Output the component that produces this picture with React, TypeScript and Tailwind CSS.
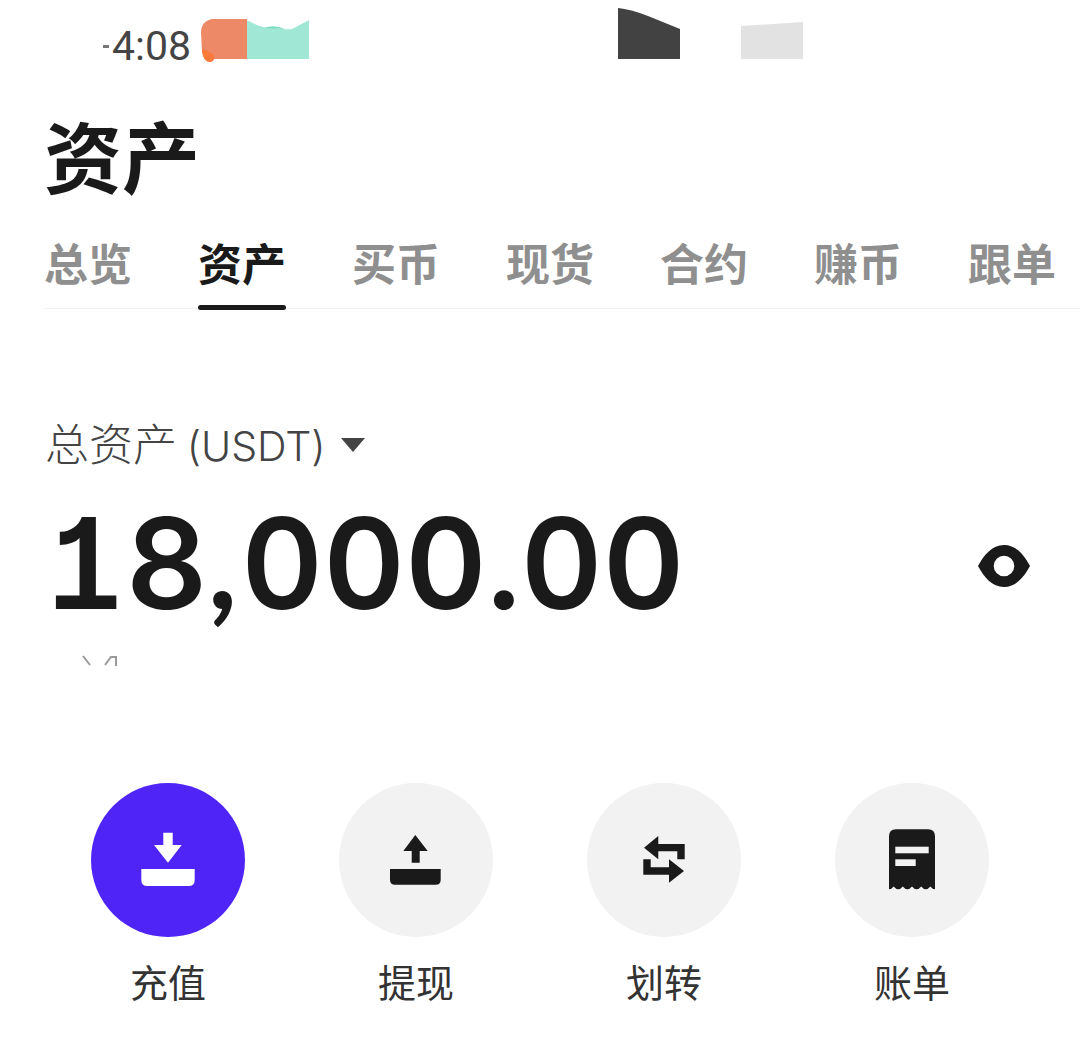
const CJK = "font-['Noto_Sans_CJK_SC','Noto_Sans',sans-serif]";

function Smudges() {
  return (
    <div className="flex h-[66px] items-start pl-[103px]">
      <span className="mt-[24px] flex w-[97px] items-center font-['Roboto',sans-serif] text-[41px] leading-[44px] text-[#444444]">
        <span className="mr-[3px] block h-[3px] w-[6px] bg-[#777777]" />4:08
      </span>
      <svg width="109" height="46" viewBox="0 0 109 46" className="mt-[17px]">
        <path d="M47 2 H12 Q1 4 1 16 L2 34 Q3 45 11 45 L14 42 H47 Z" fill="#ee8967" />
        <path d="M2 32 Q3 45 10 45 Q15 45 14 38 L8 34 Z" fill="#fb7a3a" />
        <path d="M47 3 Q62 12 74 11 Q85 13 92 12 L109 3 V42 H47 Z" fill="#a0e8d5" />
        <path d="M64 11 Q74 7 85 12 Z" fill="#7ddcc2" />
      </svg>
      <svg width="62" height="52" viewBox="0 0 62 52" className="ml-[309px] mt-[7px]">
        <path d="M0 1 Q12 2 30 9 L62 22 V52 H0 Z" fill="#424242" />
      </svg>
      <svg width="62" height="38" viewBox="0 0 62 38" className="ml-[61px] mt-[21px]">
        <path d="M0 5 L62 1 V38 H0 Z" fill="#e2e2e2" />
      </svg>
    </div>
  );
}

const tabs = ["总览", "资产", "买币", "现货", "合约", "赚币", "跟单"];

function Tabs() {
  return (
    <div className="ml-[44px] mt-[38px] flex h-[77px] gap-[66px] border-b border-[#f2f2f2]">
      {tabs.map((t, i) => (
        <div key={t} className="relative w-[88px] shrink-0">
          <span className={`block text-[44px] leading-[60px] font-semibold whitespace-nowrap ${i === 1 ? "text-[#1a1a1a]" : "text-[#8f8f8f]"}`}>{t}</span>
          {i === 1 && <div className="absolute bottom-[-2px] left-0 right-0 h-[5px] rounded-full bg-[#1a1a1a]" />}
        </div>
      ))}
    </div>
  );
}

function Download() {
  return (
    <svg width="154" height="154" viewBox="0 0 154 154">
      <path d="M72.3 49.7H81.7V62H90.7L77 79.7 63 62H72.3Z" fill="#fff" />
      <path d="M50.3 86H103.7V97Q103.7 103 97.7 103H56.3Q50.3 103 50.3 97Z" fill="#fff" />
    </svg>
  );
}
function Upload() {
  return (
    <svg width="154" height="154" viewBox="0 0 154 154">
      <path d="M76.3 52L88.7 68H80.7V79.7H72.7V68H64.3Z" fill="#1a1a1a" />
      <path d="M51 86H101.7V96.7Q101.7 101.7 96.7 101.7H56Q51 101.7 51 96.7Z" fill="#1a1a1a" />
    </svg>
  );
}
function Transfer() {
  return (
    <svg width="154" height="154" viewBox="0 0 154 154">
      <path d="M57 64.7L71.3 53V61H97.7V76.3H90.3V68.3H71.3V76.3Z" fill="#1a1a1a" />
      <path d="M97 88L82 99.7V91.7H56.3V76.3H63.7V84.3H82V76.3Z" fill="#1a1a1a" />
    </svg>
  );
}
function Receipt() {
  return (
    <svg width="154" height="154" viewBox="0 0 154 154">
      <path
        d="M54 53.3Q54 46.3 61 46.3H93Q100 46.3 100 53.3V106.3Q97.5 106.3 95.4 103.5Q93 106.3 90.8 106.3Q88.5 106.3 86.2 103.5Q84 106.3 81.6 106.3Q79.3 106.3 77 103.5Q74.7 106.3 72.4 106.3Q70 106.3 67.8 103.5Q65.5 106.3 63.2 106.3Q61 106.3 58.6 103.5Q56.5 106.3 54 106.3Z"
        fill="#1a1a1a"
      />
      <rect x="60.3" y="63.7" width="33.4" height="6.6" fill="#f2f2f2" />
      <rect x="60.3" y="76.3" width="20.4" height="6.7" fill="#f2f2f2" />
    </svg>
  );
}

function Action({ label, primary, children }: { label: string; primary?: boolean; children: React.ReactNode }) {
  return (
    <div className="flex w-[154px] flex-col items-center">
      <div className={`flex h-[154px] w-[154px] items-center justify-center rounded-full ${primary ? "bg-[#4f25f7]" : "bg-[#f2f2f2]"}`}>
        {children}
      </div>
      <span className="mt-[16px] text-[38px] leading-[56px] text-[#333333]">{label}</span>
    </div>
  );
}

export default function App() {
  return (
    <div className={`h-[1048px] w-[1080px] overflow-hidden bg-white ${CJK}`}>
      <Smudges />
      <h1 className="ml-[44px] mt-[33px] h-[95px] text-[78px] leading-[110px] font-bold text-[#1a1a1a]">资产</h1>
      <Tabs />
      <div className="ml-[45px] mt-[105px] flex h-[60px] items-center">
        <span className="text-[44px] leading-[60px] font-light text-[#444444]">
          总资产 <span className="font-['Inter',sans-serif] text-[41px]">(USDT)</span>
        </span>
        <svg width="24" height="14" viewBox="0 0 24 14" className="ml-[15px] mt-[2px]">
          <path d="M0 0H24L12 14Z" fill="#444444" />
        </svg>
      </div>
      <div className="mt-[29px] flex h-[120px] items-center justify-between pl-[44px] pr-[50px]">
        <span className="mb-[4px] font-['Inter',sans-serif] text-[126.5px] leading-[120px] font-semibold text-[#1a1a1a] [font-feature-settings:'tnum','cv01']">
          18<span className="mr-[4px] font-['Lato',sans-serif] font-bold">,</span>000.00
        </span>
        <svg width="52" height="42" viewBox="0 0 52 42" className="mt-[6px]">
          <path fillRule="evenodd" d="M0 21C6 10 14 0 26 0S46 10 52 21C46 32 38 42 26 42S6 32 0 21ZM26 10.7A10.3 10.3 0 1 0 26 31.3A10.3 10.3 0 1 0 26 10.7Z" fill="#1a1a1a" />
        </svg>
      </div>
      <svg width="36" height="12" viewBox="0 0 36 12" className="ml-[82px] mt-[32px]">
        <path d="M1 1L8 10M23 10L29 2H35M34 2V11" stroke="#999999" strokeWidth="2" fill="none" />
      </svg>
      <div className="ml-[91px] mt-[116px] flex gap-[94px]">
        <Action label="充值" primary><Download /></Action>
        <Action label="提现"><Upload /></Action>
        <Action label="划转"><Transfer /></Action>
        <Action label="账单"><Receipt /></Action>
      </div>
    </div>
  );
}
